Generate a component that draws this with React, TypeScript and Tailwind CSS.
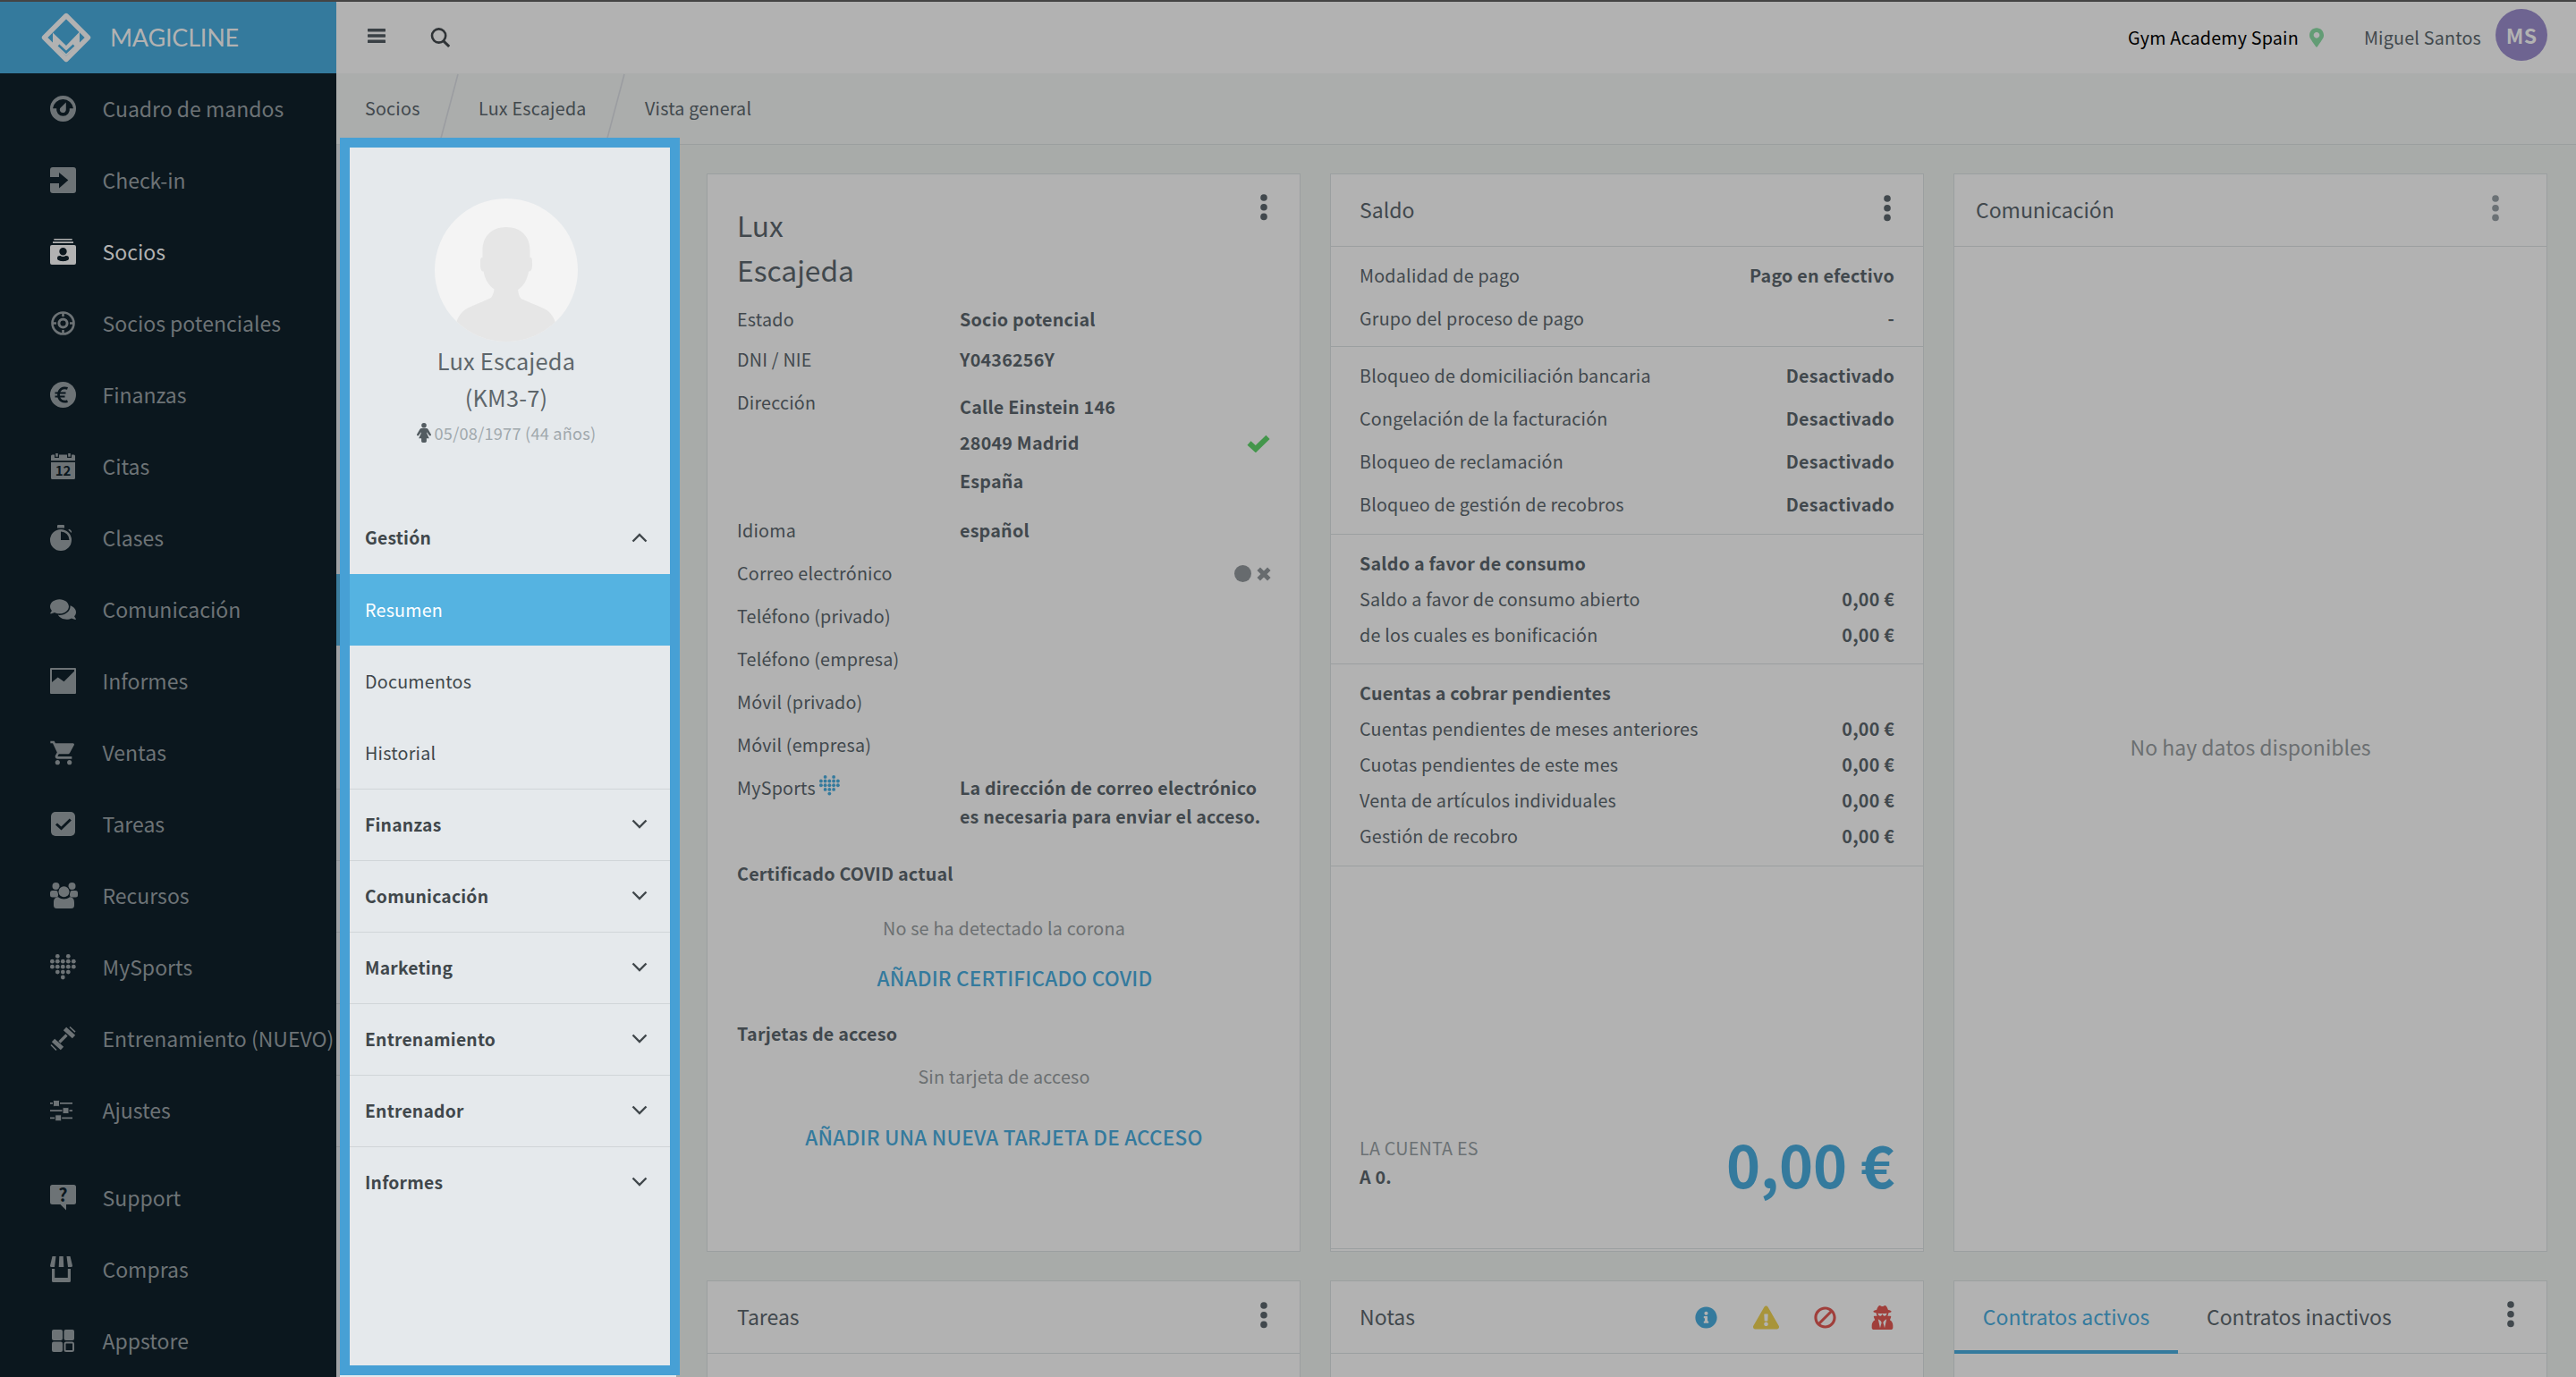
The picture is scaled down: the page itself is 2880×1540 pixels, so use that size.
import type { ReactNode } from "react";
import { FaBan, FaComments, FaExclamationTriangle, FaInfoCircle, FaMapMarkerAlt, FaUserSecret } from "react-icons/fa";
import { MdShoppingCart } from "react-icons/md";

const heartDots = [
  [8.3, 2.4], [20.3, 2.4],
  [2.4, 8.2], [8.3, 8.2], [14.3, 8.2], [20.3, 8.2], [26.3, 8.2],
  [2.4, 14.2], [8.3, 14.2], [14.3, 14.2], [20.3, 14.2], [26.3, 14.2],
  [8.3, 20.1], [14.3, 20.1], [20.3, 20.1],
  [14.3, 26],
];

function HeartDots({ className }: { className?: string }) {
  return (
    <svg viewBox="0 0 29 29" fill="currentColor" className={className}>
      {heartDots.map(([x, y]) => (
        <circle key={`${x}-${y}`} cx={x} cy={y} r="2.4" />
      ))}
    </svg>
  );
}

function NavSvg({ children }: { children: ReactNode }) {
  return (
    <svg viewBox="0 0 29 29" fill="currentColor" className="size-[29px] overflow-visible">
      {children}
    </svg>
  );
}

const navIcons: Record<string, ReactNode> = {
  dashboard: (
    <NavSvg>
      <path
        fillRule="evenodd"
        d="M14.5 0a14.5 14.5 0 1 1 0 29a14.5 14.5 0 0 1 0-29ZM3 14.2h4.2a7.4 7.4 0 1 0 14.6 0H26A11.6 11.6 0 0 0 3 14.2Z"
      />
      <path d="M17.8 7.6v7.6a3.5 3.5 0 1 1-6.6-1.2Z" />
    </NavSvg>
  ),
  checkin: (
    <NavSvg>
      <path
        fillRule="evenodd"
        d="M3 0h23a3 3 0 0 1 3 3v23a3 3 0 0 1-3 3H3a3 3 0 0 1-3-3v-8h10v5.5l10.3-9L10 6v5H0V3a3 3 0 0 1 3-3Z"
      />
    </NavSvg>
  ),
  members: (
    <NavSvg>
      <path d="M4.3 0h20.4v1.6H4.3zM3 3.3h23v1.7H3z" />
      <path
        fillRule="evenodd"
        d="M2 7h25a2 2 0 0 1 2 2v18a2 2 0 0 1-2 2H2a2 2 0 0 1-2-2V9a2 2 0 0 1 2-2Zm12.5 3a4.2 4.2 0 1 0 0 8.4a4.2 4.2 0 0 0 0-8.4ZM8 22c0 4.2 13 4.2 13 0c0-2.4-1.5-3-3.5-2.9c-1.8 1.2-4.2 1.2-6 0C9.5 19 8 19.6 8 22Z"
      />
    </NavSvg>
  ),
  target: (
    <NavSvg>
      <g fill="none" stroke="currentColor" strokeWidth="2.6">
        <circle cx="14.5" cy="14.5" r="12" />
        <circle cx="14.5" cy="14.5" r="4.6" strokeWidth="3" />
        <path d="M14.5 2.5v4.5M14.5 22v4.5M2.5 14.5h4.5M22 14.5h4.5" />
      </g>
    </NavSvg>
  ),
  finance: (
    <NavSvg>
      <circle cx="14.5" cy="14.5" r="14.5" />
      <g fill="none" stroke="#0b171e" strokeWidth="2.8">
        <path d="M19.5 7.4c-5-1.8-10 .6-10 7.1s5 8.9 10 7.1" />
        <path d="M5.5 12.6h12M5.5 16.6h11" strokeWidth="2" />
      </g>
    </NavSvg>
  ),
  calendar: (
    <NavSvg>
      <path d="M1 8.3V3a1.5 1.5 0 0 1 1.5-1.5H5V5h5V1.5h9V5h5V1.5h2.5A1.5 1.5 0 0 1 28 3v5.3ZM6.2 0h2.6v3.8H6.2zM20.2 0h2.6v3.8h-2.6zM1 10h27v17.5a1.5 1.5 0 0 1-1.5 1.5h-24A1.5 1.5 0 0 1 1 27.5Z" />
      <text x="14.5" y="25" textAnchor="middle" fill="#0b171e" className="font-['Noto_Sans_CJK_SC',sans-serif] text-[15px] font-bold">
        12
      </text>
    </NavSvg>
  ),
  stopwatch: (
    <NavSvg>
      <path d="M9 0h6a1 1 0 0 1 1 1v2.6H8V1a1 1 0 0 1 1-1ZM20.2 5.5l1.6-.8 2.2 2.2V9Z" />
      <path fillRule="evenodd" d="M12 5a12 12 0 1 1 0 24a12 12 0 0 1 0-24Zm0 2.5v9.5h9.5A9.5 9.5 0 0 0 12 7.5Z" />
    </NavSvg>
  ),
  chat: <FaComments className="size-[29px]" />,
  reports: (
    <NavSvg>
      <path fillRule="evenodd" d="M1 0h27a1 1 0 0 1 1 1v27a1 1 0 0 1-1 1H1a1 1 0 0 1-1-1V1a1 1 0 0 1 1-1Zm1 2v14l6.7-5.5 6.8 4.7L27 3.8V2Z" />
    </NavSvg>
  ),
  cart: <MdShoppingCart className="-mt-[1.5px] -ml-[1.5px] size-[32px]" />,
  tasks: (
    <NavSvg>
      <rect x="1" y="1" width="27" height="27" rx="5" />
      <path d="M7 14.5l5.5 5L22.8 9.5" fill="none" stroke="#0b171e" strokeWidth="3" />
    </NavSvg>
  ),
  resources: (
    <NavSvg>
      <circle cx="6.5" cy="4" r="4" />
      <circle cx="24.5" cy="4" r="4" />
      <rect x="0" y="9" width="9" height="7.6" rx="2.5" />
      <rect x="22" y="9" width="9" height="7.6" rx="2.5" />
      <circle cx="15.5" cy="10.3" r="7" fill="#0b171e" />
      <circle cx="15.5" cy="10.3" r="6" />
      <path d="M9 16.2c4 3 9 3 13 0c3.5 0 5 2.5 5 6v3.3a3.5 3.5 0 0 1-3.5 3.5h-16A3.5 3.5 0 0 1 4 25.5v-3.3c0-3.5 1.5-6 5-6Z" />
    </NavSvg>
  ),
  mysports: <HeartDots className="size-[29px]" />,
  dumbbell: (
    <NavSvg>
      <g fill="none" stroke="currentColor">
        <path d="M10.5 18.5l8-8" strokeWidth="3.2" />
        <path d="M16.5 3.5l10 9M3.5 16.5l10 9" strokeWidth="5" />
        <path d="M22 1.5l6 5.6M1 21.5l6 6" strokeWidth="1.6" />
      </g>
    </NavSvg>
  ),
  settings: (
    <NavSvg>
      <path d="M0 6h25v1.8H0zM0 14.2h25V16H0zM0 22.4h25v1.8H0z" />
      <g stroke="#0b171e">
        <rect x="3.5" y="3.4" width="7" height="7" rx="1" />
        <rect x="14" y="11.6" width="7" height="7" rx="1" />
        <rect x="5.7" y="19.8" width="7" height="7" rx="1" />
      </g>
    </NavSvg>
  ),
  support: (
    <NavSvg>
      <path d="M2.5 0h24A2.5 2.5 0 0 1 29 2.5v17a2.5 2.5 0 0 1-2.5 2.5H18v6.5L11.5 22h-9A2.5 2.5 0 0 1 0 19.5v-17A2.5 2.5 0 0 1 2.5 0Z" />
      <text x="14.5" y="18.5" textAnchor="middle" fill="#0b171e" className="font-['Noto_Sans_CJK_SC',sans-serif] text-[20px] font-bold">
        ?
      </text>
    </NavSvg>
  ),
  shop: (
    <NavSvg>
      <path d="M2.5 0h4L5 12H1.5A1.5 1.5 0 0 1 0 10.5ZM10.3 0h4.4l.6 12H9.7ZM18.5 0h4L25 10.5a1.5 1.5 0 0 1-1.5 1.5H20Z" />
      <path d="M2 14h3.2v10h14.6V14H23v13.5a1.5 1.5 0 0 1-1.5 1.5h-18A1.5 1.5 0 0 1 2 27.5Z" />
    </NavSvg>
  ),
  apps: (
    <NavSvg>
      <rect x="2" y="2" width="12" height="12" rx="2" />
      <rect x="15.5" y="2" width="11.5" height="12" rx="2" />
      <rect x="2" y="15.5" width="12" height="11.5" rx="2" />
      <rect x="16.5" y="16.5" width="9.5" height="9.5" rx="1.5" fill="none" stroke="currentColor" strokeWidth="2" />
    </NavSvg>
  ),
};

const mainNav = [
  ["dashboard", "Cuadro de mandos"],
  ["checkin", "Check-in"],
  ["members", "Socios"],
  ["target", "Socios potenciales"],
  ["finance", "Finanzas"],
  ["calendar", "Citas"],
  ["stopwatch", "Clases"],
  ["chat", "Comunicación"],
  ["reports", "Informes"],
  ["cart", "Ventas"],
  ["tasks", "Tareas"],
  ["resources", "Recursos"],
  ["mysports", "MySports"],
  ["dumbbell", "Entrenamiento (NUEVO)"],
  ["settings", "Ajustes"],
];

const bottomNav = [
  ["support", "Support"],
  ["shop", "Compras"],
  ["apps", "Appstore"],
];

function NavItem({ icon, label, active }: { icon: string; label: string; active?: boolean }) {
  return (
    <a className={`flex h-20 items-center pl-14 text-[23px] whitespace-nowrap ${active ? "text-[#b2b2b2]" : "text-[#6d7376]"}`}>
      <span className="-mt-px h-[29px] w-[58.5px] shrink-0">{navIcons[icon]}</span>
      <span className="-mt-[2px]">{label}</span>
    </a>
  );
}

function Sidebar() {
  return (
    <aside className="flex w-[376px] shrink-0 flex-col bg-[#0b171e]">
      <div className="flex h-20 items-center bg-[#347a9d] pl-[46px] text-[#b2b2b2]">
        <svg viewBox="0 0 56 56" className="size-14">
          <path d="M28 3.5L52.5 28L28 52.5L3.5 28Z" fill="none" stroke="currentColor" strokeWidth="5.4" strokeLinejoin="round" />
          <path d="M13 22.5L28 37L43 21.5V35L28 48.5L13 35Z" fill="currentColor" />
          <path d="M19.5 36.5L28 44.5L36.5 36.5" fill="none" stroke="#347a9d" strokeWidth="2.6" />
        </svg>
        <span className="-mt-px ml-[21px] font-[Lato,sans-serif] text-[27px] tracking-[-0.2px]">MAGICLINE</span>
      </div>
      <nav>
        {mainNav.map(([icon, label]) => (
          <NavItem key={label} icon={icon} label={label} active={label === "Socios"} />
        ))}
      </nav>
      <nav className="mt-[18px]">
        {bottomNav.map(([icon, label]) => (
          <NavItem key={label} icon={icon} label={label} />
        ))}
      </nav>
    </aside>
  );
}

function TopBar() {
  return (
    <header className="flex h-20 shrink-0 items-center bg-[#b2b2b2] pl-[35px]">
      <svg viewBox="0 0 20 16" fill="#3a4045" className="-mt-[4px] h-4 w-5">
        <rect width="20" height="3.4" rx=".6" />
        <rect y="6.3" width="20" height="3.4" rx=".6" />
        <rect y="12.6" width="20" height="3.4" rx=".6" />
      </svg>
      <svg viewBox="0 0 22 22" fill="none" stroke="#2f3336" strokeWidth="2.6" className="ml-[50px] size-[22px]">
        <circle cx="9.6" cy="9" r="7.6" />
        <path d="M14.8 14.8l6.4 6.2" strokeWidth="3" />
      </svg>
      <div className="ml-auto flex items-center pr-8 tracking-[0.2px]">
        <span className="text-black">Gym Academy Spain</span>
        <FaMapMarkerAlt className="ml-3 h-[22px] w-4 text-[#639c75]" />
        <span className="ml-[45px]">Miguel Santos</span>
        <span className="-mt-[6px] ml-4 flex size-[58px] items-center justify-center rounded-full bg-[#6e6491] text-[23px] font-bold text-[#b2b2b2]">
          MS
        </span>
      </div>
    </header>
  );
}

function Slash() {
  return (
    <svg viewBox="0 0 24 80" className="h-20 w-6">
      <path d="M22 1L1 80" stroke="#9b9da1" strokeWidth="1.6" />
    </svg>
  );
}

function Breadcrumb() {
  return (
    <div className="flex h-20 shrink-0 items-center border-b border-[#9b9f9f] bg-[#abadac] pl-8 tracking-[0.22px]">
      <span className="-mt-[2px] w-[82px]">Socios</span>
      <Slash />
      <span className="-mt-[2px] ml-[21px] w-[141px]">Lux Escajeda</span>
      <Slash />
      <span className="-mt-[2px] ml-[21px]">Vista general</span>
    </div>
  );
}

function Chevron({ up }: { up?: boolean }) {
  return (
    <svg viewBox="0 0 18 11" fill="none" stroke="#40474b" strokeWidth="2.4" className={up ? "-mt-[2px] w-[18px] rotate-180" : "-mt-[2px] w-[18px]"}>
      <path d="M1.5 1.5L9 9l7.5-7.5" />
    </svg>
  );
}

const closedGroups = ["Finanzas", "Comunicación", "Marketing", "Entrenamiento", "Entrenador", "Informes"];

function MemberPanel() {
  return (
    <div className="relative z-10 w-[380px] shrink-0 bg-[#e5e9ec] text-[#40474b]">
      <div className="flex flex-col items-center pt-[60px] text-[#5d666b]">
        <svg viewBox="0 0 160 160" className="size-40 overflow-hidden rounded-full bg-[#f4f4f4]">
          <path
            d="M80 32c17 0 26.5 11 26.5 26v8c2.5 0 2.5 1 2.5 8c0 5-1 7.5-3.8 7.5c-2.2 9.5-5.2 16-12.2 20.5c.5 4 1.5 7.5 3.5 10c8 4 17 7 26.5 11.5c7 4 11 10 12.5 17.5V160H24v-20c1.5-7.5 6-13.5 13-17.5c9.5-4.5 18.5-7.5 26-11.5c2-2.5 3-5.5 3.5-9.5c-7-5-10-11-12-20c-2.5 0-3.5-2.5-3.5-7.5c0-7 0-8 2.5-8V58c0-15 9.5-26 26.5-26Z"
            fill="#e6e6e6"
          />
        </svg>
        <div className="mt-px text-center text-[25.4px] leading-[41px] tracking-[0.2px]">
          Lux Escajeda
          <br />
          (KM3-7)
        </div>
        <div className="mt-[6px] flex h-[26px] items-center gap-1 text-[18.2px] tracking-[0.22px] text-[#a0a8ac]">
          <svg viewBox="0 0 16 22" className="h-[22px] w-4" fill="#535c61">
            <circle cx="8" cy="2.8" r="2.8" />
            <path d="M5.3 6h5.4c.9 0 1.5.4 2 1.2l3.2 5.6c.6 1.3-1.2 2.2-2 1.2L11.2 10.3v1.2l2.6 5.7h-2.9v3.3c0 2-5.8 2-5.8 0v-3.3H2.2l2.6-5.7v-1.2L2.1 14c-.8 1-2.6.1-2-1.2l3.2-5.6c.5-.8 1.1-1.2 2-1.2Z" />
          </svg>
          05/08/1977 (44 años)
        </div>
      </div>
      <nav className="mt-[65px] tracking-[0.22px]">
        <div className="flex h-20 items-center justify-between pr-[32px] pl-8 text-[19.3px] font-bold">
          Gestión
          <Chevron up />
        </div>
        <div className="flex h-20 items-center bg-[#55b3e1] pl-8 text-white">Resumen</div>
        <div className="flex h-20 items-center pl-8">Documentos</div>
        <div className="flex h-20 items-center pl-8">Historial</div>
        {closedGroups.map((g) => (
          <div key={g} className="flex h-20 items-center justify-between border-t border-[#d0d5d8] pr-[32px] pl-8 text-[19.3px] font-bold">
            {g}
            <Chevron />
          </div>
        ))}
      </nav>
      <div className="absolute inset-y-0 left-0 w-1 bg-black/30" />
      <div className="absolute -top-2 left-1 h-[1384px] w-[380px] border-[11px] border-[#47a0d5]" />
    </div>
  );
}

function Kebab({ light }: { light?: boolean }) {
  return (
    <svg viewBox="0 0 8 30" className={light ? "h-[30px] w-2 text-[#6b7175]" : "h-[30px] w-2 text-[#41484d]"} fill="currentColor">
      <circle cx="4" cy="4" r="3.8" />
      <circle cx="4" cy="14.7" r="3.8" />
      <circle cx="4" cy="25.4" r="3.8" />
    </svg>
  );
}

function Card({ className = "", children }: { className?: string; children: ReactNode }) {
  return <section className={`flex flex-col border border-[#9b9fa0] bg-[#b2b2b2] ${className}`}>{children}</section>;
}

function CardHeader({ title, className = "pl-8", children }: { title: string; className?: string; children?: ReactNode }) {
  return (
    <div className={`flex h-[81px] shrink-0 items-center justify-between border-b border-[#9b9fa0] ${className}`}>
      <h2 className="-mt-px text-[23px] tracking-normal">{title}</h2>
      {children}
    </div>
  );
}

function Field({ label, children, className = "h-12" }: { label: ReactNode; children?: ReactNode; className?: string }) {
  return (
    <div className={`flex items-center ${className}`}>
      <span className="flex w-[249px] shrink-0 items-center">{label}</span>
      <span className="font-bold">{children}</span>
    </div>
  );
}

function ProfileCard() {
  return (
    <Card className="h-[1206px] pl-[33px]">
      <div className="flex justify-between pr-[36px]">
        <h1 className="mt-[31px] mb-2 text-[31.7px] leading-[50px] tracking-normal">
          Lux
          <br />
          Escajeda
        </h1>
        <div className="mt-[22px]">
          <Kebab />
        </div>
      </div>
      <Field label="Estado" className="h-[46px]">Socio potencial</Field>
      <Field label="DNI / NIE" className="h-[44px]">Y0436256Y</Field>
      <div className="mt-[2px] flex h-[143px]">
        <span className="w-[249px] leading-[48px]">Dirección</span>
        <div className="pt-[9px] font-bold">
          <p className="h-10 leading-10">Calle Einstein 146</p>
          <p className="h-10 leading-10">28049 Madrid</p>
          <p className="mt-[3px] h-10 leading-10">España</p>
        </div>
        <svg viewBox="0 0 26 20" className="mt-[60px] mr-[33px] ml-auto h-5 w-[26px]">
          <path d="M2.5 9.5L9.8 16.2L23.5 2.8" fill="none" stroke="#43964b" strokeWidth="6" />
        </svg>
      </div>
      <Field label="Idioma">español</Field>
      <div className="flex h-12 items-center pr-[32px]">
        Correo electrónico
        <i className="mr-[6px] ml-auto size-[19px] rounded-full bg-[#676b6e]" />
        <svg viewBox="0 0 16 16" className="mt-px size-4">
          <path d="M2.2 2.2L13.8 13.8M13.8 2.2L2.2 13.8" stroke="#676b6e" strokeWidth="5" />
        </svg>
      </div>
      <Field label="Teléfono (privado)" />
      <Field label="Teléfono (empresa)" />
      <Field label="Móvil (privado)" />
      <Field label="Móvil (empresa)" />
      <div className="flex pt-2 leading-8">
        <span className="flex w-[249px] shrink-0">
          MySports
          <HeartDots className="mt-[2px] ml-1 size-[23px] text-[#347a9d]" />
        </span>
        <span className="text-[19.6px] font-bold">
          La dirección de correo electrónico
          <br />
          es necesaria para enviar el acceso.
        </span>
      </div>
      <h3 className="mt-8 leading-8 font-bold">Certificado COVID actual</h3>
      <p className="mt-[29px] pr-8 text-center leading-8 text-[#6b6f71]">No se ha detectado la corona</p>
      <p className="mt-[23px] pr-2 text-center text-[22.5px] leading-8 font-medium text-[#347a9d]">AÑADIR CERTIFICADO COVID</p>
      <h3 className="mt-[31px] leading-8 font-bold">Tarjetas de acceso</h3>
      <p className="mt-4 pr-8 text-center leading-8 text-[#6b6f71]">Sin tarjeta de acceso</p>
      <p className="mt-[35px] pr-8 text-center text-[22.5px] leading-8 font-medium text-[#347a9d]">
        AÑADIR UNA NUEVA TARJETA DE ACCESO
      </p>
    </Card>
  );
}

function Row({ label, value, tight }: { label: string; value?: string; tight?: boolean }) {
  return (
    <div className={`flex items-center justify-between ${tight ? "h-10" : "h-12"}`}>
      <span className={value ? "" : "font-bold"}>{label}</span>
      <span className="font-bold">{value}</span>
    </div>
  );
}

function BalanceCard() {
  return (
    <Card className="h-[1206px]">
      <CardHeader title="Saldo">
        <div className="-mt-[5px] mr-[36px]">
          <Kebab />
        </div>
      </CardHeader>
      <div className="h-[112px] border-b border-[#9b9fa0] px-8 pt-2">
        <Row label="Modalidad de pago" value="Pago en efectivo" />
        <Row label="Grupo del proceso de pago" value="-" />
      </div>
      <div className="h-[210px] border-b border-[#9b9fa0] px-8 pt-2">
        <Row label="Bloqueo de domiciliación bancaria" value="Desactivado" />
        <Row label="Congelación de la facturación" value="Desactivado" />
        <Row label="Bloqueo de reclamación" value="Desactivado" />
        <Row label="Bloqueo de gestión de recobros" value="Desactivado" />
      </div>
      <div className="h-[145px] border-b border-[#9b9fa0] px-8 pt-3">
        <Row tight label="Saldo a favor de consumo" />
        <Row tight label="Saldo a favor de consumo abierto" value="0,00 €" />
        <Row tight label="de los cuales es bonificación" value="0,00 €" />
      </div>
      <div className="h-[226px] border-b border-[#9b9fa0] px-8 pt-3">
        <Row tight label="Cuentas a cobrar pendientes" />
        <Row tight label="Cuentas pendientes de meses anteriores" value="0,00 €" />
        <Row tight label="Cuotas pendientes de este mes" value="0,00 €" />
        <Row tight label="Venta de artículos individuales" value="0,00 €" />
        <Row tight label="Gestión de recobro" value="0,00 €" />
      </div>
      <div className="mb-[2px] flex flex-1 items-end justify-between border-b border-[#9b9fa0] px-8 pb-16">
        <div className="leading-8">
          <p className="text-[#6b7174]">LA CUENTA ES</p>
          <p className="font-bold">A 0.</p>
        </div>
        <span className="-mb-[2px] text-[64.6px] leading-[66px] font-bold tracking-normal text-[#347a9d]">0,00 €</span>
      </div>
    </Card>
  );
}

export default function App() {
  return (
    <div className="flex h-[1540px] w-[2880px] flex-col overflow-hidden bg-[#a8aba9] font-['Noto_Sans_CJK_SC',sans-serif] text-[19.7px] leading-none text-[#41484d]">
      <div className="h-[2px] shrink-0 bg-[#444444]" />
      <div className="flex min-h-0 flex-1">
        <Sidebar />
        <main className="flex min-w-0 flex-1 flex-col">
          <TopBar />
          <Breadcrumb />
          <div className="flex min-h-0 flex-1">
            <MemberPanel />
            <div className="ml-[34px] grid w-[2058px] shrink-0 grid-cols-3 content-start gap-x-[33px] gap-y-8 pt-8 tracking-[0.22px]">
              <ProfileCard />
              <BalanceCard />
              <Card className="h-[1206px]">
                <CardHeader title="Comunicación" className="pl-6">
                  <div className="-mt-[5px] mr-[53px]">
                    <Kebab light />
                  </div>
                </CardHeader>
                <div className="flex flex-1 items-center justify-center pb-1 text-[23px] tracking-normal text-[#6b6f71]">
                  No hay datos disponibles
                </div>
              </Card>

              <Card className="h-[200px]">
                <CardHeader title="Tareas" className="pl-[33px]">
                  <div className="-mt-[5px] mr-[36px]">
                    <Kebab />
                  </div>
                </CardHeader>
              </Card>
              <Card className="h-[200px]">
                <CardHeader title="Notas">
                  <div className="mr-8 flex items-center">
                    <FaInfoCircle className="size-[25px] text-[#347a9d]" />
                    <FaExclamationTriangle className="ml-10 size-[29px] text-[#a8943a]" />
                    <FaBan className="ml-[39px] size-[25px] -scale-x-100 text-[#a03f3b]" />
                    <FaUserSecret className="ml-[38px] size-[27px] text-[#a03f3b]" />
                  </div>
                </CardHeader>
              </Card>
              <Card className="h-[200px]">
                <div className="flex h-[81px] border-b border-[#9b9fa0] text-[23px] tracking-normal">
                  <span className="-mb-px flex w-[250px] items-center justify-center border-b-4 border-[#347a9d] pt-[2px] text-[#347a9d]">
                    Contratos activos
                  </span>
                  <span className="-mt-[2px] ml-8 flex items-center">Contratos inactivos</span>
                  <div className="mt-[22px] mr-[36px] ml-auto">
                    <Kebab />
                  </div>
                </div>
              </Card>
            </div>
          </div>
        </main>
      </div>
    </div>
  );
}
